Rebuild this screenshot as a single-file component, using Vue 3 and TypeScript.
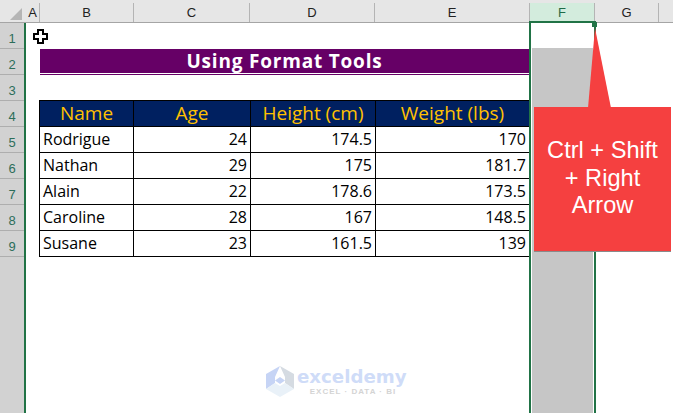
<script setup lang="ts">
const cols = [
  { label: 'A', cls: 'w-a' },
  { label: 'B', cls: 'w-b' },
  { label: 'C', cls: 'w-c' },
  { label: 'D', cls: 'w-d' },
  { label: 'E', cls: 'w-e' },
  { label: 'F', cls: 'w-f on' },
  { label: 'G', cls: 'w-g' },
  { label: '', cls: 'w-h' }
]
const rowNums = [1, 2, 3, 4, 5, 6, 7, 8, 9]
const heads = ['Name', 'Age', 'Height (cm)', 'Weight (lbs)']
const people: [string, number, number, number][] = [
  ['Rodrigue', 24, 174.5, 170],
  ['Nathan', 29, 175, 181.7],
  ['Alain', 22, 178.6, 173.5],
  ['Caroline', 28, 167, 148.5],
  ['Susane', 23, 161.5, 139]
]
</script>

<template>
  <div class="app">
    <div class="colhead">
      <div class="corner"><span class="tri"></span></div>
      <div v-for="c in cols" :key="c.cls" class="col" :class="c.cls">{{ c.label }}</div>
    </div>
    <div class="body">
      <div class="rowhead">
        <div v-for="r in rowNums" :key="r" class="rownum">{{ r }}</div>
      </div>
      <div class="sheet">
        <div class="title-wrap">
          <div class="title">Using Format Tools</div>
        </div>
        <div class="table">
          <div v-for="h in heads" :key="h" class="th">{{ h }}</div>
          <template v-for="p in people" :key="p[0]">
            <div class="td">{{ p[0] }}</div>
            <div class="td num">{{ p[1] }}</div>
            <div class="td num">{{ p[2] }}</div>
            <div class="td num">{{ p[3] }}</div>
          </template>
        </div>

        <svg class="cursor" width="15" height="15" viewBox="0 0 15 15">
          <path d="M5 1h5v4h4v5h-4v4H5v-4H1V5h4z" fill="#fff" stroke="#000" stroke-width="2" />
        </svg>
        <div class="selection">
          <div class="fill"></div>
          <span class="handle"></span>
        </div>
        <svg class="pointer" width="24" height="82" viewBox="0 0 24 82">
          <polygon points="7,0 0,80 23,80" fill="#f54040" />
          <line x1="0" y1="80.500" x2="23" y2="80.500" stroke="#8a8a8a" />
        </svg>
        <div class="callout">Ctrl + Shift<br />+ Right<br />Arrow</div>
        <div class="mark">
          <svg width="30" height="32" viewBox="0 0 30 32">
            <polygon points="15,0 1,8 1,23 10,17 10,11" fill="#c6d4f5" />
            <polygon points="15,0 29,8 29,23 20,17 20,11" fill="#d5dbe2" />
            <polygon points="1,23 15,31 29,23 20,17 15,20 10,17" fill="#e9f1f8" />
            <polygon points="15,11 20,14.500 15,18 10,14.500" fill="#c6d4f5" />
          </svg>
          <div class="mark-text">
            <div class="mark-name">exceldemy</div>
            <div class="mark-sub">EXCEL · DATA · BI</div>
          </div>
        </div>
      </div>
    </div>
  </div>
</template>

<style scoped>
.app {
  width: 673px;
  height: 413px;
  overflow: hidden;
  background: #fff;
  display: flex;
  flex-direction: column;
  font-family: "Open Sans", sans-serif;
}
.colhead {
  height: 23px;
  box-sizing: border-box;
  padding-top: 3px;
  display: flex;
  flex: none;
  background: #e6e6e6;
  border-bottom: 1px solid #a5a5a5;
  font-family: "Liberation Sans", sans-serif;
  font-size: 13px;
  color: #222;
}
.corner {
  width: 26px;
  flex: none;
  position: relative;
}
.tri {
  position: absolute;
  left: 10px;
  top: 5px;
  border-style: solid;
  border-width: 0 0 12px 12px;
  border-color: transparent transparent #b5b5b5 transparent;
}
.col {
  flex: none;
  box-sizing: border-box;
  border-right: 1px solid #b4b4b4;
  text-align: center;
  line-height: 20px;
}
.w-a { width: 14px; }
.w-b { width: 94px; }
.w-c { width: 116px; }
.w-d { width: 125px; }
.w-e { width: 155px; }
.w-f { width: 65px; }
.w-g { width: 64px; }
.w-h { flex: 1; border-right: 0; }
.on {
  background: #d3ecdd;
  color: #1f6b47;
}
.body {
  flex: 1;
  display: flex;
  min-height: 0;
}
.rowhead {
  width: 24px;
  flex: none;
  background: #d2d2d2;
  border-right: 2px solid #217346;
  font-family: "Liberation Sans", sans-serif;
  font-size: 13px;
  color: #2c6e5a;
}
.rownum {
  height: 26px;
  box-sizing: border-box;
  border-bottom: 1px solid #aeaeae;
  text-align: center;
  line-height: 32px;
}
.sheet {
  flex: 1;
  position: relative;
  padding: 26px 0 0 14px;
}
.title-wrap {
  width: 489px;
  height: 26px;
  box-sizing: border-box;
  border-bottom: 1px solid #660066;
  padding-bottom: 1px;
  background: #fff;
}
.title {
  height: 24px;
  background: #660066;
  color: #fff;
  font-size: 19px;
  font-weight: 700;
  letter-spacing: 0.8px;
  line-height: 25px;
  text-align: center;
}
.table {
  margin: 25px 0 0 -1px;
  width: 491px;
  display: grid;
  grid-template-columns: 94px 117px 125px 154px;
  grid-auto-rows: 26px;
  border-top: 1px solid #000;
  border-left: 1px solid #000;
  box-sizing: border-box;
}
.th, .td {
  box-sizing: border-box;
  border-right: 1px solid #000;
  border-bottom: 1px solid #000;
}
.th {
  background: #002060;
  color: #ffc000;
  font-size: 19px;
  line-height: 24px;
  text-align: center;
}
.td {
  color: #000;
  font-size: 16px;
  line-height: 25px;
  padding: 0 3px;
  font-weight: 500;
}
.num { text-align: right; }
.cursor {
  position: absolute;
  left: 7px;
  top: 6px;
}
.selection {
  position: absolute;
  left: 503px;
  top: -2px;
  width: 67px;
  height: 394px;
  box-sizing: border-box;
  border: solid #217346;
  border-width: 2px 2px 0 2px;
}
.fill {
  position: absolute;
  left: 1px;
  top: 25px;
  width: 61px;
  bottom: 0;
  background: #c6c6c6;
}
.handle {
  position: absolute;
  right: -3px;
  top: -1px;
  width: 5px;
  height: 5px;
  background: #217346;
}
.pointer {
  position: absolute;
  left: 562px;
  top: 5px;
}
.callout {
  position: absolute;
  left: 508px;
  top: 84px;
  width: 137px;
  height: 145px;
  box-sizing: border-box;
  background: #f54040;
  border-bottom: 1px solid #8a8a8a;
  color: #fff;
  font-family: "Liberation Sans", sans-serif;
  font-size: 23.6px;
  line-height: 27.5px;
  text-align: center;
  padding-top: 30px;
}
.mark {
  position: absolute;
  left: 239px;
  top: 343px;
  display: flex;
  gap: 2px;
}
.mark-text {
  position: relative;
  width: 112px;
}
.mark-name {
  font-family: "DejaVu Sans", sans-serif;
  font-weight: 700;
  font-size: 18.2px;
  line-height: 22px;
  color: #cfdcf8;
  white-space: nowrap;
}
.mark-sub {
  font-family: "Liberation Sans", sans-serif;
  font-size: 8px;
  font-weight: 700;
  letter-spacing: 1px;
  line-height: 7px;
  color: #d4d4d4;
  text-align: center;
  white-space: nowrap;
}
</style>
